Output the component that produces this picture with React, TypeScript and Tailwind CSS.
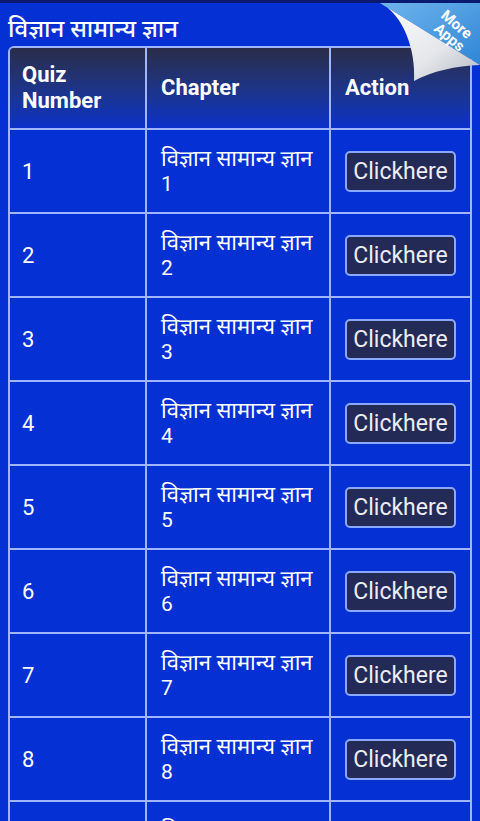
import React from "react";

const rows = [1, 2, 3, 4, 5, 6, 7, 8, 9];

// folded corner in the top right
const PageCurl: React.FC = () => (
  <div className="absolute right-0 top-[3px] w-[100px] h-[82px] pointer-events-none">
    <svg width="100" height="82" viewBox="0 0 100 82">
      <defs>
        <linearGradient id="tab" x1="0" y1="0" x2="1" y2="1">
          <stop offset="0" stopColor="#6fb4ec" />
          <stop offset="1" stopColor="#2f86d6" />
        </linearGradient>
        <linearGradient id="curl" x1="0" y1="0" x2="1" y2="1">
          <stop offset="0" stopColor="#ffffff" />
          <stop offset="0.6" stopColor="#e4e6ea" />
          <stop offset="1" stopColor="#b4b8c2" />
        </linearGradient>
      </defs>
      <polygon points="0,0 100,0 100,62" fill="url(#tab)" />
      <path d="M0,0 C24,12 36,48 34,78 C52,68 76,63 100,62 Z" fill="url(#curl)" />
      <text
        x="0"
        y="0"
        fill="#ffffff"
        fontFamily="Roboto, sans-serif"
        fontWeight="700"
        fontSize="15"
        transform="translate(60,14) rotate(40)"
      >
        More
      </text>
      <text
        x="0"
        y="0"
        fill="#ffffff"
        fontFamily="Roboto, sans-serif"
        fontWeight="700"
        fontSize="15"
        transform="translate(53,27) rotate(40)"
      >
        Apps
      </text>
    </svg>
  </div>
);

const App: React.FC = () => {
  return (
    <div
      className="relative w-[480px] h-[821px] overflow-hidden bg-[#0530d4] text-white"
      style={{ fontFamily: "Roboto, 'Noto Sans', 'Noto Sans Devanagari', sans-serif" }}
    >
      <div className="h-[3px] bg-[#0a1a70]" />
      <div className="px-[8px] pt-[12px] h-[43px] text-[24px] leading-[29px] font-medium">
        विज्ञान सामान्य ज्ञान
      </div>

      <div className="mx-[8px] border-2 border-[#9fb6ff] rounded-t-[6px] overflow-hidden">
        {/* header */}
        <div className="grid grid-cols-[137px_184px_1fr] h-[82px] bg-gradient-to-b from-[#2a2c48] to-[#0a30c8] text-[22px] leading-[26px] font-bold border-b-2 border-[#9fb6ff]">
          <div className="flex items-center pl-[12px] border-r-2 border-[#9fb6ff]">
            Quiz
            <br />
            Number
          </div>
          <div className="flex items-center pl-[14px] border-r-2 border-[#9fb6ff]">Chapter</div>
          <div className="flex items-center pl-[14px]">Action</div>
        </div>

        {rows.map((n) => (
          <div
            key={n}
            className="grid grid-cols-[137px_184px_1fr] h-[84px] border-b-2 border-[#9fb6ff]"
          >
            <div className="flex items-center pl-[12px] text-[22px] border-r-2 border-[#9fb6ff]">
              {n}
            </div>
            <div className="flex flex-col justify-center pl-[14px] border-r-2 border-[#9fb6ff]">
              <span className="text-[22px] leading-[26px] whitespace-nowrap">विज्ञान सामान्य ज्ञान</span>
              <span className="text-[21px] leading-[24px]">{n}</span>
            </div>
            <div className="flex items-center pl-[14px]">
              <button className="h-[41px] w-[111px] rounded-[5px] border-2 border-[#8aa8ff] bg-[#222a55] text-[23px] leading-[37px] text-[#ececf4]">
                Clickhere
              </button>
            </div>
          </div>
        ))}
      </div>

      <PageCurl />
    </div>
  );
};

export default App;
